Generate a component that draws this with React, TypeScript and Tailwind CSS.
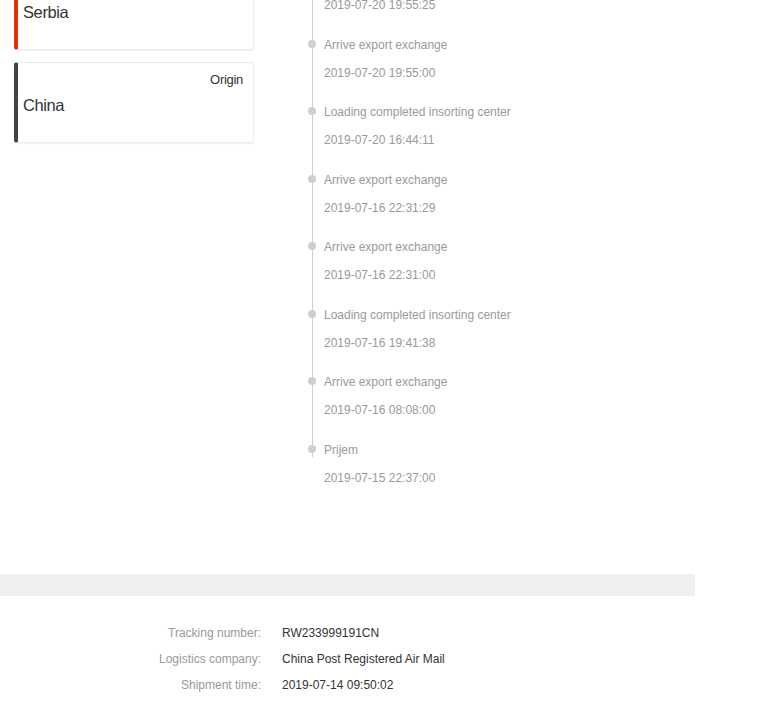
import React from "react";

const events = [
  { t: "Arrive export exchange", d: "2019-07-20 19:55:25" },
  { t: "Arrive export exchange", d: "2019-07-20 19:55:00" },
  { t: "Loading completed insorting center", d: "2019-07-20 16:44:11" },
  { t: "Arrive export exchange", d: "2019-07-16 22:31:29" },
  { t: "Arrive export exchange", d: "2019-07-16 22:31:00" },
  { t: "Loading completed insorting center", d: "2019-07-16 19:41:38" },
  { t: "Arrive export exchange", d: "2019-07-16 08:08:00" },
  { t: "Prijem", d: "2019-07-15 22:37:00" },
];

const font = { fontFamily: '"Liberation Sans", Arial, sans-serif' };

function Card({ name, label, color }: { name: string; label: string; color: string }) {
  return (
    <div className={`h-[81px] rounded-[3px] border border-[#ececec] border-l-4 ${color} bg-white shadow-[0_1px_1px_rgba(0,0,0,0.05)] pl-[5px] pr-[10px] pt-[8px]`}>
      <div className="h-[17px] text-right text-[13px] tracking-[-0.3px] leading-[17px] text-[#333]">{label}</div>
      <div className="mt-[5px] text-[16.5px] tracking-[-0.4px] leading-[24px] text-[#333]">{name}</div>
    </div>
  );
}

export default function App() {
  return (
    <div className="w-[768px] h-[709px] overflow-hidden bg-white" style={font}>
      <div className="mt-[-32px] flex">
        <div className="ml-[14px] w-[240px] pt-[1px] flex flex-col gap-[12px]">
          <Card name="Serbia" label="" color="border-l-[#e62e04]" />
          <Card name="China" label="Origin" color="border-l-[#444]" />
        </div>
        <div className="ml-[54px] relative">
          <div className="absolute left-[3.5px] top-0 h-[489px] w-px bg-[#d0d0d0]" />
          {events.map((e, i) => (
            <div key={i} className="relative h-[67.5px] pl-[16px] flex flex-col">
              <div className="absolute left-0 top-[4px] h-[8px] w-[8px] rounded-full bg-[#cfcfcf]" />
              <div className="h-[19px] text-[12px] leading-[18px] text-[#9a9a9a] whitespace-nowrap">{e.t}</div>
              <div className="mt-[8px] h-[20px] text-[12px] leading-[20px] text-[#9a9a9a] whitespace-nowrap">{e.d}</div>
            </div>
          ))}
        </div>
      </div>
      <div className="mt-[66px] h-[22px] w-[695px] bg-[#efefef]" />
      <div className="mt-[24px] flex flex-col">
        {[
          ["Tracking number:", "RW233999191CN"],
          ["Logistics company:", "China Post Registered Air Mail"],
          ["Shipment time:", "2019-07-14 09:50:02"],
        ].map(([k, v]) => (
          <div key={k} className="flex h-[26px] items-center text-[12px]">
            <div className="ml-[100px] w-[161px] text-right text-[#999]">{k}</div>
            <div className="ml-[21px] text-[#333]">{v}</div>
          </div>
        ))}
      </div>
    </div>
  );
}
